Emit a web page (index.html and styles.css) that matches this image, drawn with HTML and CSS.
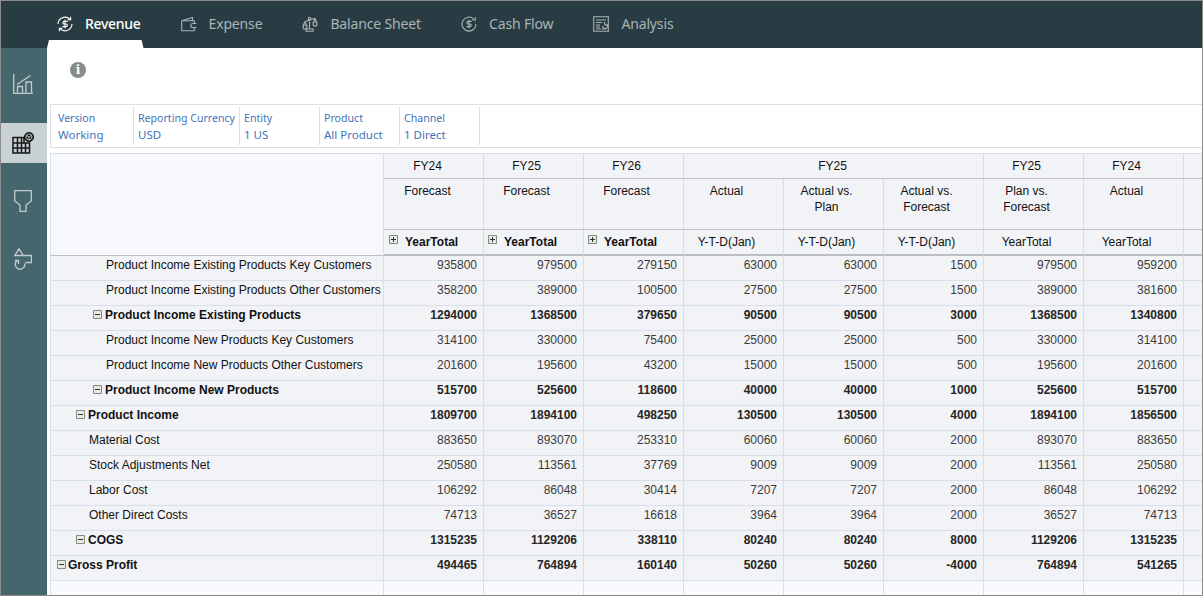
FILE: index.html
```html
<!DOCTYPE html>
<html lang="en">
<head>
<meta charset="utf-8">
<title>Revenue</title>
<link rel="stylesheet" href="styles.css">
</head>
<body>
<div class="app">
  <nav class="topnav">
    <a class="tab active">
      <svg class="tab-icon" viewBox="0 0 16 16"><path d="M13 3.3A7 7 0 0 0 1 8M3 12.7A7 7 0 0 0 15 8M13.6 .8v3h-3M2.4 15.2v-3h3M10.7 5.4H7.2a1.3 1.3 0 0 0 0 2.6h1.8a1.3 1.3 0 0 1 0 2.6H5.500M8 3.800v8.400"/></svg>
      <span>Revenue</span>
    </a>
    <a class="tab">
      <svg class="tab-icon" viewBox="0 0 16 16"><path d="M.7 4.8v10h12.6v-3M13.300 7.500V4.800H.7L11.500 1.500v3.300M15.500 7.500h-3.700a2 2 0 0 0 0 4h3.700"/></svg>
      <span>Expense</span>
    </a>
    <a class="tab">
      <svg class="tab-icon" viewBox="0 0 16 16"><path d="M4 15.300h7v-2.300H4zM7.500 13V3M3 5.500L13 2.200M3 5.500L1 10M3 5.500L5 10M13 2.200L11.300 7M13 2.200L15 7"/><circle cx="7.500" cy="2.600" r="1.300"/><circle cx="3" cy="11" r="2"/><circle cx="13" cy="8" r="2"/></svg>
      <span>Balance Sheet</span>
    </a>
    <a class="tab">
      <svg class="tab-icon" viewBox="0 0 16 16"><path d="M12.500 2.700A7 7 0 1 0 15 8M14.300 .9v3h-3M14.700 6.500h.3M10.700 5.400H7.200a1.300 1.300 0 0 0 0 2.600h1.800a1.300 1.300 0 0 1 0 2.600H5.500M8 3.800v8.400"/></svg>
      <span>Cash Flow</span>
    </a>
    <a class="tab">
      <svg class="tab-icon" viewBox="0 0 16 16"><path d="M.7.700h14.600v14.600H.7zM3 4h10M3 6.500h6M3 9h4M3 11h4M3 13h5M9 13h4.300M9.500 10a2.500 2.500 0 1 0 4-2M11.500 6v2.500l2 1"/></svg>
      <span>Analysis</span>
    </a>
  </nav>
  <div class="workspace">
    <aside class="sidenav">
      <a class="side-item">
        <svg class="side-icon" viewBox="0 0 20 20"><path d="M.7 0v19.300h20M4 10.500L17.500 1.500M4.500 18.500v-6h5v6M13 18.500V8h5.500v10.500"/></svg>
      </a>
      <a class="side-item current">
        <svg class="side-icon" viewBox="0 0 24 24"><path class="grid-lines" d="M2 6.500h11V12h5.500v10H2zM2 12h16.500M2 17h16.500M6.500 6.500V22M10.500 6.500V22M14.500 12v10"/><circle class="cube-ring" cx="18" cy="6" r="4.600"/><path class="cube" d="M18 2.800l2.800 1.600v3.200L18 9.200l-2.800-1.600V4.400zM15.200 4.400L18 6l2.800-1.600M18 6v3.200"/></svg>
      </a>
      <a class="side-item">
        <svg class="side-icon funnel" viewBox="0 0 18 22"><path d="M.7.700h16.600V11L12 15v6.300H6V15L.7 11z"/></svg>
      </a>
      <a class="side-item">
        <svg class="side-icon shapes" viewBox="0 0 18 22"><path d="M5 .8l4.200 6.700H.8zM3.500 7.500h14v7h-6M10.700 15.500A4.700 4.700 0 1 1 3.500 12.500M1 12.500h3.500V16"/></svg>
      </a>
    </aside>
    <main class="content">
      <div class="info-row">
        <span class="info-badge">i</span>
      </div>
      <div class="pov">
        <div class="pov-item pov-version"><span class="pov-label">Version</span><span>Working</span></div>
        <div class="pov-item pov-currency"><span class="pov-label">Reporting Currency</span><span>USD</span></div>
        <div class="pov-item pov-entity"><span class="pov-label">Entity</span><span>1 US</span></div>
        <div class="pov-item pov-product"><span class="pov-label">Product</span><span>All Product</span></div>
        <div class="pov-item pov-channel"><span class="pov-label">Channel</span><span>1 Direct</span></div>
      </div>
      <div class="grid-wrap">
        <table class="grid">
          <colgroup>
            <col class="col-label">
            <col class="col-num"><col class="col-num"><col class="col-num"><col class="col-num">
            <col class="col-num"><col class="col-num"><col class="col-num"><col class="col-num"><col class="col-num">
          </colgroup>
          <thead>
            <tr class="h1">
              <th class="corner" rowspan="3"></th>
              <th class="first">FY24</th><th>FY25</th><th>FY26</th>
              <th class="span" colspan="3">FY25</th>
              <th>FY25</th><th>FY24</th><th></th>
            </tr>
            <tr class="h2">
              <th class="first">Forecast</th><th>Forecast</th><th>Forecast</th>
              <th>Actual</th><th>Actual vs.<br>Plan</th><th>Actual vs.<br>Forecast</th>
              <th>Plan vs.<br>Forecast</th><th>Actual</th><th></th>
            </tr>
            <tr class="h3">
              <th class="exp exp-first"><svg class="toggle" viewBox="0 0 9 9"><path class="box" d="M.5.500h8v8h-8z"/><path d="M2 4.500h5M4.500 2v5"/></svg><b>YearTotal</b></th>
              <th class="exp"><svg class="toggle" viewBox="0 0 9 9"><path class="box" d="M.5.500h8v8h-8z"/><path d="M2 4.500h5M4.500 2v5"/></svg><b>YearTotal</b></th>
              <th class="exp"><svg class="toggle" viewBox="0 0 9 9"><path class="box" d="M.5.500h8v8h-8z"/><path d="M2 4.500h5M4.500 2v5"/></svg><b>YearTotal</b></th>
              <th>Y-T-D(Jan)</th><th>Y-T-D(Jan)</th><th>Y-T-D(Jan)</th>
              <th>YearTotal</th><th>YearTotal</th><th></th>
            </tr>
          </thead>
          <tbody>
            <tr><th class="l3">Product Income Existing Products Key Customers</th><td>935800</td><td>979500</td><td>279150</td><td>63000</td><td>63000</td><td>1500</td><td>979500</td><td>959200</td><td></td></tr>
            <tr><th class="l3">Product Income Existing Products Other Customers</th><td>358200</td><td>389000</td><td>100500</td><td>27500</td><td>27500</td><td>1500</td><td>389000</td><td>381600</td><td></td></tr>
            <tr class="total"><th class="t2"><svg class="toggle" viewBox="0 0 9 9"><path class="box" d="M.5.500h8v8h-8z"/><path d="M2 4.500h5"/></svg>Product Income Existing Products</th><td>1294000</td><td>1368500</td><td>379650</td><td>90500</td><td>90500</td><td>3000</td><td>1368500</td><td>1340800</td><td></td></tr>
            <tr><th class="l3">Product Income New Products Key Customers</th><td>314100</td><td>330000</td><td>75400</td><td>25000</td><td>25000</td><td>500</td><td>330000</td><td>314100</td><td></td></tr>
            <tr><th class="l3">Product Income New Products Other Customers</th><td>201600</td><td>195600</td><td>43200</td><td>15000</td><td>15000</td><td>500</td><td>195600</td><td>201600</td><td></td></tr>
            <tr class="total"><th class="t2"><svg class="toggle" viewBox="0 0 9 9"><path class="box" d="M.5.500h8v8h-8z"/><path d="M2 4.500h5"/></svg>Product Income New Products</th><td>515700</td><td>525600</td><td>118600</td><td>40000</td><td>40000</td><td>1000</td><td>525600</td><td>515700</td><td></td></tr>
            <tr class="total"><th class="t1"><svg class="toggle" viewBox="0 0 9 9"><path class="box" d="M.5.500h8v8h-8z"/><path d="M2 4.500h5"/></svg>Product Income</th><td>1809700</td><td>1894100</td><td>498250</td><td>130500</td><td>130500</td><td>4000</td><td>1894100</td><td>1856500</td><td></td></tr>
            <tr><th class="l2">Material Cost</th><td>883650</td><td>893070</td><td>253310</td><td>60060</td><td>60060</td><td>2000</td><td>893070</td><td>883650</td><td></td></tr>
            <tr><th class="l2">Stock Adjustments Net</th><td>250580</td><td>113561</td><td>37769</td><td>9009</td><td>9009</td><td>2000</td><td>113561</td><td>250580</td><td></td></tr>
            <tr><th class="l2">Labor Cost</th><td>106292</td><td>86048</td><td>30414</td><td>7207</td><td>7207</td><td>2000</td><td>86048</td><td>106292</td><td></td></tr>
            <tr><th class="l2">Other Direct Costs</th><td>74713</td><td>36527</td><td>16618</td><td>3964</td><td>3964</td><td>2000</td><td>36527</td><td>74713</td><td></td></tr>
            <tr class="total"><th class="t1"><svg class="toggle" viewBox="0 0 9 9"><path class="box" d="M.5.500h8v8h-8z"/><path d="M2 4.500h5"/></svg>COGS</th><td>1315235</td><td>1129206</td><td>338110</td><td>80240</td><td>80240</td><td>8000</td><td>1129206</td><td>1315235</td><td></td></tr>
            <tr class="total"><th class="t0"><svg class="toggle" viewBox="0 0 9 9"><path class="box" d="M.5.500h8v8h-8z"/><path d="M2 4.500h5"/></svg>Gross Profit</th><td>494465</td><td>764894</td><td>160140</td><td>50260</td><td>50260</td><td>-4000</td><td>764894</td><td>541265</td><td></td></tr>
            <tr class="blank"><th></th><td></td><td></td><td></td><td></td><td></td><td></td><td></td><td></td><td></td></tr>
          </tbody>
        </table>
      </div>
    </main>
  </div>
</div>
</body>
</html>
```
FILE: styles.css
```css
* { box-sizing: border-box; }
html, body { margin: 0; height: 100%; overflow: hidden; background: #fff; }

.app {
  height: 596px;
  display: flex;
  flex-direction: column;
  border: 1px solid #8b8b8b;
  overflow: hidden;
}

/* top navigation */
.topnav {
  flex: none;
  height: 47px;
  background: #293c43;
  display: flex;
  align-items: flex-start;
  padding-left: 56px;
  font-family: "Noto Sans", sans-serif;
  font-size: 14px;
  letter-spacing: -0.15px;
  color: #a9b4b7;
}
.tab {
  position: relative;
  display: flex;
  align-items: center;
  gap: 12px;
  height: 47px;
  padding-bottom: 2px;
  margin-right: 40px;
}
.tab-icon {
  width: 16px;
  height: 16px;
  flex: none;
  fill: none;
  stroke: currentColor;
  stroke-width: 1.1;
}
.tab.active { color: #fff; font-weight: 500; letter-spacing: -0.3px; }
.tab.active::after {
  content: "";
  position: absolute;
  left: -10px;
  right: -3px;
  bottom: 0;
  height: 8px;
  background: #fff;
  clip-path: polygon(2px 0, calc(100% - 2px) 0, 100% 100%, 0 100%);
}

/* body */
.workspace { flex: 1; display: flex; min-height: 0; }
.sidenav {
  flex: none;
  width: 46px;
  background: #44666c;
  display: flex;
  flex-direction: column;
  gap: 19px;
  padding-top: 16px;
}
.side-item {
  height: 40px;
  display: flex;
  align-items: center;
  justify-content: center;
  padding-right: 2px;
  color: #c3cccd;
}
.side-item.current { background: #c9d2d3; color: #161616; }
.side-icon {
  width: 20px;
  height: 20px;
  fill: none;
  stroke: currentColor;
  stroke-width: 1.3;
}
.side-item.current .side-icon { width: 24px; height: 24px; }
.grid-lines { stroke-width: 1.5; }
.cube-ring { fill: #161616; stroke: #161616; stroke-width: 1; }
.cube { stroke: #c9d2d3; stroke-width: .9; }
.funnel { width: 18px; height: 22px; transform: translateY(-1px); }
.shapes { width: 18px; height: 22px; transform: translateY(-2px); }

.content { flex: 1; min-width: 0; display: flex; flex-direction: column; }

.info-row { flex: none; height: 56px; padding: 14px 0 0 23px; }
.info-badge {
  display: block;
  width: 16px;
  height: 16px;
  border-radius: 50%;
  background: #868c8c;
  color: #fff;
  font: bold 12px/16px "DejaVu Serif", serif;
  text-align: center;
}

.pov {
  flex: none;
  height: 44px;
  margin-left: 3px;
  border: 1px solid #d8dfe7;
  border-right: 0;
  display: flex;
  align-items: center;
  font-family: "Noto Sans", sans-serif;
  font-size: 11.500px;
  line-height: 17px;
  color: #3f74b8;
}
.pov-label { font-size: 10.600px; line-height: 16px; }
.pov-item {
  height: 38px;
  padding: 3px 0 0 4px;
  border-right: 1px solid #d8dfe7;
  display: flex;
  flex-direction: column;
  white-space: nowrap;
}
.pov-version { width: 83px; padding-left: 7px; }
.pov-currency { width: 106px; }
.pov-entity { width: 80px; }
.pov-product { width: 80px; }
.pov-channel { width: 80px; }

.grid-wrap {
  flex: none;
  margin: 5px 0 0 3px;
  overflow: hidden;
  height: 442px;
  border-left: 1px solid #d8dfe7;
}
.grid {
  border-collapse: separate;
  border-spacing: 0;
  table-layout: fixed;
  width: 1233px;
  font-family: "Liberation Sans", Arial, sans-serif;
  font-size: 12px;
  line-height: 14px;
  color: #111;
}
.col-label { width: 333px; }
.col-num { width: 100px; }

.grid th, .grid td {
  padding: 0;
  font-weight: normal;
  vertical-align: top;
  overflow: hidden;
  white-space: nowrap;
  border-right: 1px solid #d8dde3;
  background: #f2f3f7;
}
.grid thead th {
  text-align: center;
  padding-right: 14px;
}
.grid thead th.first { padding-left: 1px; padding-right: 13px; }
.grid thead tr.h1 th {
  height: 26px;
  padding-top: 5px;
  border-top: 1px solid #d8dde3;
  border-bottom: 1px solid #bcbfc4;
}
.grid thead tr.h1 th.span { padding-right: 2px; }
.grid thead tr.h2 th {
  height: 51px;
  padding-top: 4px;
  line-height: 16px;
  border-bottom: 1px solid #bcbfc4;
}
.grid thead tr.h3 th {
  height: 26px;
  padding-top: 5px;
  border-bottom: 2px solid #bcbfc4;
}
.grid thead th.corner {
  background: #f6f8fc;
  padding: 0;
  border-bottom: 2px solid #d8dde3;
}
.grid thead tr.h3 th.exp { text-align: left; padding: 4px 0 0 4px; }
.grid thead tr.h3 th.exp-first { padding-left: 5px; }
.grid thead tr.h3 th.exp b { margin-left: 7px; position: relative; top: 1px; }
.grid thead tr.h3 th.exp .toggle { margin: 0; position: relative; top: -1px; }

.grid tbody th, .grid tbody td {
  height: 25px;
  padding-top: 2px;
  border-bottom: 1px solid #d8dfe7;
}
.grid tbody th { text-align: left; color: #111; }
.grid tbody td { text-align: right; padding-right: 6px; color: #3b3b3b; }
.grid tbody tr.total th, .grid tbody tr.total td { font-weight: bold; color: #111; }
.grid tbody tr.total td { color: #262626; }
.grid tbody tr.blank th, .grid tbody tr.blank td { background: #f9fafd; }

.l3 { padding-left: 55px !important; }
.l2 { padding-left: 38px !important; }
.t2 { padding-left: 42px !important; }
.t1 { padding-left: 25px !important; }
.t0 { padding-left: 6px !important; }
.t0 .toggle { margin-right: 2px; }

.toggle {
  width: 9px;
  height: 9px;
  display: inline-block;
  vertical-align: 0;
  margin-right: 3px;
  fill: none;
  stroke: #333;
  stroke-width: 1;
}
.toggle .box { fill: #e6ebe4; stroke: #7f8a80; }
```
